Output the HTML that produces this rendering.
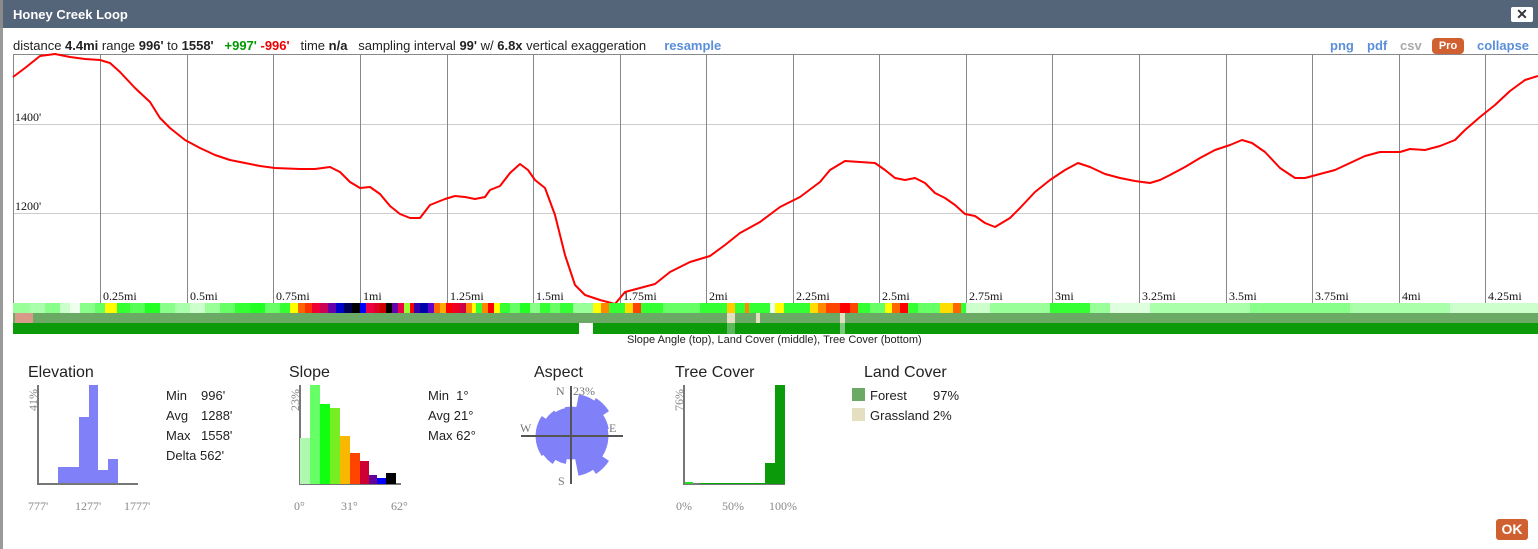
<!DOCTYPE html>
<html><head><meta charset="utf-8"><style>
*{margin:0;padding:0;box-sizing:border-box}
body{width:1538px;height:549px;overflow:hidden;background:#fff;font-family:"Liberation Sans",Arial,sans-serif;position:relative}
.bar{position:absolute;left:0;top:0;width:1538px;height:28px;background:#546479;border-left:3px solid #8a8a8a}
.bar .t{position:absolute;left:10px;top:7px;color:#fff;font-weight:bold;font-size:13px}
.x{position:absolute;left:1508px;top:7px;width:22px;height:15px;background:#fff;border-radius:2px;text-align:center;font-size:14px;line-height:15px;font-weight:bold;color:#333}
.lb{position:absolute;left:0;top:28px;width:3px;height:521px;background:#9a9a9a}
.hdr{position:absolute;left:13px;top:38px;font-size:13px;color:#222;white-space:nowrap}
.hdr b{font-weight:bold}
.lk{color:#5b8fd9;font-weight:bold}
.rt{position:absolute;top:38px;font-size:13px;font-weight:bold}
.pro{position:absolute;left:1432px;top:38px;width:32px;height:16px;background:#d0602f;color:#fff;border-radius:4px;font-size:11px;font-weight:bold;text-align:center;line-height:16px}
.strip{position:absolute;left:13px;width:1525px}
.ok{position:absolute;left:1496px;top:519px;width:32px;height:21px;background:#d0602f;color:#fff;border-radius:3px;font-size:14px;font-weight:bold;text-align:center;line-height:21px}
.cap{position:absolute;left:627px;top:334px;font-size:11px;color:#222}
</style></head><body>
<div class="bar"><span class="t">Honey Creek Loop</span><div class="x">✕</div></div>
<div class="lb"></div>
<div class="hdr">distance <b>4.4mi</b> range <b>996'</b> to <b>1558'</b> &nbsp;&nbsp;<b style="color:#090">+997'</b> <b style="color:#e00">-996'</b> &nbsp;&nbsp;time <b>n/a</b> &nbsp;&nbsp;sampling interval <b>99'</b> w/ <b>6.8x</b> vertical exaggeration &nbsp;&nbsp;&nbsp;&nbsp;<span class="lk">resample</span></div>
<span class="rt lk" style="left:1330px">png</span>
<span class="rt lk" style="left:1367px">pdf</span>
<span class="rt" style="left:1400px;color:#aaa">csv</span>
<div class="pro">Pro</div>
<span class="rt lk" style="left:1477px">collapse</span>

<svg style="position:absolute;left:0;top:0" width="1538" height="549">
<g stroke="#ccc" stroke-width="1"><line x1="13" y1="124.5" x2="1538" y2="124.5"/><line x1="13" y1="213.5" x2="1538" y2="213.5"/></g>
<g stroke="#888" stroke-width="1">
<line x1="13.5" y1="54" x2="13.5" y2="303"/><line x1="13" y1="54.5" x2="1538" y2="54.5"/>
<line x1="100.5" y1="54" x2="100.5" y2="303"/><line x1="187.5" y1="54" x2="187.5" y2="303"/><line x1="273.5" y1="54" x2="273.5" y2="303"/><line x1="360.5" y1="54" x2="360.5" y2="303"/><line x1="447.5" y1="54" x2="447.5" y2="303"/><line x1="533.5" y1="54" x2="533.5" y2="303"/><line x1="620.5" y1="54" x2="620.5" y2="303"/><line x1="706.5" y1="54" x2="706.5" y2="303"/><line x1="793.5" y1="54" x2="793.5" y2="303"/><line x1="879.5" y1="54" x2="879.5" y2="303"/><line x1="966.5" y1="54" x2="966.5" y2="303"/><line x1="1052.5" y1="54" x2="1052.5" y2="303"/><line x1="1139.5" y1="54" x2="1139.5" y2="303"/><line x1="1226.5" y1="54" x2="1226.5" y2="303"/><line x1="1312.5" y1="54" x2="1312.5" y2="303"/><line x1="1399.5" y1="54" x2="1399.5" y2="303"/><line x1="1485.5" y1="54" x2="1485.5" y2="303"/>
</g>
<g font-family="Liberation Serif,serif" font-size="12" fill="#111">
<text x="15" y="121">1400'</text><text x="15" y="210">1200'</text>
<text x="103" y="300">0.25mi</text><text x="190" y="300">0.5mi</text><text x="276" y="300">0.75mi</text><text x="363" y="300">1mi</text><text x="450" y="300">1.25mi</text><text x="536" y="300">1.5mi</text><text x="623" y="300">1.75mi</text><text x="709" y="300">2mi</text><text x="796" y="300">2.25mi</text><text x="882" y="300">2.5mi</text><text x="969" y="300">2.75mi</text><text x="1055" y="300">3mi</text><text x="1142" y="300">3.25mi</text><text x="1229" y="300">3.5mi</text><text x="1315" y="300">3.75mi</text><text x="1402" y="300">4mi</text><text x="1488" y="300">4.25mi</text>
</g>
<polyline fill="none" stroke="#f00" stroke-width="2" stroke-linejoin="round" points="13,77 25,68 40,56 55,54 70,57 85,59 100,60 110,63 120,72 135,88 150,102 160,118 170,128 185,140 200,148 215,155 230,160 245,163 260,166 275,168 300,169 315,169 330,167 340,172 350,182 360,188 370,187 380,194 390,206 400,214 410,218 420,218 430,205 445,199 455,196 465,197 475,199 485,197 490,190 500,186 510,173 520,164 528,170 535,180 545,188 555,215 565,255 575,285 585,295 600,300 615,304 625,292 640,288 655,284 670,272 690,262 710,256 725,245 740,233 760,222 780,207 800,197 820,182 830,170 845,161 860,162 875,163 885,170 895,178 905,180 915,178 925,183 935,193 945,198 955,205 965,214 975,216 985,223 995,227 1010,218 1020,208 1035,192 1050,180 1065,170 1078,163 1090,167 1105,174 1120,178 1135,181 1150,183 1160,180 1170,175 1185,167 1200,158 1215,150 1230,145 1242,140 1252,143 1265,152 1280,168 1295,178 1305,178 1320,174 1335,170 1350,163 1365,156 1380,152 1400,152 1410,149 1425,150 1440,146 1455,140 1465,130 1480,117 1495,105 1510,91 1525,80 1538,76"/>
</svg>

<div class="strip" style="top:303px;height:10px;background:linear-gradient(90deg,#9f9 0 17px,#afa 17px 32px,#8f8 32px 47px,#cfc 47px 57px,#efe 57px 67px,#8f8 67px 82px,#6f6 82px 92px,#ff0 92px 104px,#3f3 104px 117px,#5f5 117px 132px,#2f2 132px 147px,#8f8 147px 162px,#afa 162px 177px,#cfc 177px 192px,#9f9 192px 207px,#6f6 207px 222px,#3f3 222px 237px,#2f2 237px 252px,#6f6 252px 267px,#3f3 267px 277px,#ff0 277px 285px,#f60 285px 292px,#f30 292px 299px,#e03 299px 307px,#c05 307px 315px,#60a 315px 323px,#00c 323px 331px,#005 331px 339px,#000 339px 347px,#00f 347px 353px,#e04 353px 361px,#d02 361px 367px,#c00 367px 373px,#000 373px 379px,#60a 379px 385px,#e04 385px 391px,#9f3 391px 397px,#f00 397px 401px,#30a 401px 407px,#00a 407px 415px,#60c 415px 421px,#f60 421px 427px,#fa0 427px 433px,#f00 433px 439px,#e02 439px 447px,#c04 447px 453px,#f80 453px 459px,#ff0 459px 463px,#3f3 463px 469px,#f80 469px 475px,#f00 475px 481px,#ff0 481px 487px,#3f3 487px 497px,#6f6 497px 507px,#2f2 507px 517px,#8f8 517px 527px,#3f3 527px 537px,#6f6 537px 547px,#3f3 547px 560px,#9f9 560px 580px,#ff0 580px 588px,#f80 588px 596px,#3f3 596px 612px,#fd0 612px 620px,#f40 620px 628px,#3f3 628px 650px,#6f6 650px 687px,#3f3 687px 714px,#fc0 714px 722px,#3f3 722px 732px,#f80 732px 736px,#3f3 736px 757px,#efe 757px 762px,#ff0 762px 771px,#3f3 771px 797px,#fd0 797px 805px,#f80 805px 813px,#f40 813px 827px,#f00 827px 837px,#f40 837px 845px,#3f3 845px 857px,#6f6 857px 872px,#ff0 872px 879px,#f60 879px 887px,#f00 887px 895px,#3f3 895px 905px,#6f6 905px 927px,#fd0 927px 940px,#f60 940px 948px,#3f3 948px 953px,#cfc 953px 977px,#9f9 977px 1037px,#3f3 1037px 1077px,#9f9 1077px 1097px,#dfd 1097px 1137px,#afa 1137px 1237px,#8f8 1237px 1337px,#afa 1337px 1437px,#cfc 1437px 1525px)"></div>
<div class="strip" style="top:313px;height:10px;background:linear-gradient(90deg,#6aaa64 0 2px,#d99a8a 2px 20px,#6aaa64 20px 714px,#e3dfc0 714px 722px,#6aaa64 722px 743px,#e3dfc0 743px 747px,#6aaa64 747px 827px,#e3dfc0 827px 832px,#6aaa64 832px 1525px)"></div>
<div class="strip" style="top:323px;height:11px;background:linear-gradient(90deg,#0a9a0a 0 566px,#fff 566px 580px,#0a9a0a 580px 714px,#5bb85b 714px 722px,#0a9a0a 722px 827px,#7cc87c 827px 832px,#0a9a0a 832px 1525px)"></div>
<div class="cap">Slope Angle (top), Land Cover (middle), Tree Cover (bottom)</div>

<svg style="position:absolute;left:0;top:0" width="1538" height="549" font-family="Liberation Sans,Arial,sans-serif">
<g font-size="16" fill="#222"><text x="28" y="377">Elevation</text><text x="289" y="377">Slope</text><text x="534" y="377">Aspect</text><text x="675" y="377">Tree Cover</text><text x="864" y="377">Land Cover</text></g>
<g fill="#8080f8"><rect x="58" y="467" width="21" height="17"/><rect x="79" y="417" width="10" height="67"/><rect x="89" y="385" width="9" height="99"/><rect x="98" y="470" width="10" height="14"/><rect x="108" y="459" width="10" height="25"/></g>
<g stroke="#777" stroke-width="2" fill="none"><polyline points="38,385 38,484 138,484"/><polyline points="300,385 300,484 401,484"/><polyline points="684,385 684,484 785,484"/></g>
<g font-family="Liberation Serif,serif" font-size="12" fill="#888">
<text transform="translate(37,411) rotate(-90)">41%</text><text x="28" y="510">777'</text><text x="75" y="510">1277'</text><text x="124" y="510">1777'</text>
<text transform="translate(299,411) rotate(-90)">23%</text><text x="294" y="510">0°</text><text x="341" y="510">31°</text><text x="391" y="510">62°</text>
<text transform="translate(683,411) rotate(-90)">76%</text><text x="676" y="510">0%</text><text x="722" y="510">50%</text><text x="769" y="510">100%</text>
</g>
<g font-size="13" fill="#222"><text x="166" y="400">Min</text><text x="201" y="400">996'</text><text x="166" y="420">Avg</text><text x="201" y="420">1288'</text><text x="166" y="440">Max</text><text x="201" y="440">1558'</text><text x="166" y="460">Delta 562'</text>
<text x="428" y="400">Min &nbsp;1°</text><text x="428" y="420">Avg 21°</text><text x="428" y="440">Max 62°</text>
<text x="870" y="400">Forest</text><text x="933" y="400">97%</text><text x="870" y="420">Grassland 2%</text></g>
<rect x="852" y="388" width="13" height="13" fill="#6aaa64"/><rect x="852" y="408" width="13" height="13" fill="#e3dfc0"/>
<rect x="300" y="438" width="10" height="46" fill="#b0f8b0"/><rect x="310" y="385" width="10" height="99" fill="#66ff66"/><rect x="320" y="404" width="10" height="80" fill="#1f1"/><rect x="330" y="408" width="10" height="76" fill="#77ee22"/><rect x="340" y="436" width="10" height="48" fill="#f8b800"/><rect x="350" y="453" width="10" height="31" fill="#ff4400"/><rect x="360" y="461" width="9" height="23" fill="#cc0033"/><rect x="369" y="475" width="8" height="9" fill="#660099"/><rect x="377" y="478" width="9" height="6" fill="#0000ff"/><rect x="386" y="473" width="10" height="11" fill="#000"/>
<rect x="685" y="482" width="8" height="2" fill="#2d2"/><rect x="700" y="483" width="65" height="1" fill="#0a0"/><rect x="765" y="463" width="10" height="21" fill="#0a9a0a"/><rect x="775" y="385" width="10" height="99" fill="#0a9a0a"/>
<g transform="translate(571,436)" fill="#8080f8" stroke="#8080f8" stroke-width="0.8" stroke-linejoin="round">
<path d="M0 0L-5.66 -28.45A29 29 0 0 1 5.66 -28.45Z"/>
<path transform="rotate(22.5)" d="M0 0L-8.19 -41.2A42 42 0 0 1 8.19 -41.2Z"/>
<path transform="rotate(45)" d="M0 0L-8.78 -44.15A45 45 0 0 1 8.78 -44.15Z"/>
<path transform="rotate(67.5)" d="M0 0L-7.41 -37.28A38 38 0 0 1 7.41 -37.28Z"/>
<path transform="rotate(90)" d="M0 0L-7.22 -36.3A37 37 0 0 1 7.22 -36.3Z"/>
<path transform="rotate(112.5)" d="M0 0L-7.22 -36.3A37 37 0 0 1 7.22 -36.3Z"/>
<path transform="rotate(135)" d="M0 0L-8.78 -44.15A45 45 0 0 1 8.78 -44.15Z"/>
<path transform="rotate(157.5)" d="M0 0L-7.8 -39.24A40 40 0 0 1 7.8 -39.24Z"/>
<path transform="rotate(180)" d="M0 0L-4.49 -22.56A23 23 0 0 1 4.49 -22.56Z"/>
<path transform="rotate(202.5)" d="M0 0L-5.46 -27.47A28 28 0 0 1 5.46 -27.47Z"/>
<path transform="rotate(225)" d="M0 0L-6.44 -32.37A33 33 0 0 1 6.44 -32.37Z"/>
<path transform="rotate(247.5)" d="M0 0L-6.83 -34.34A35 35 0 0 1 6.83 -34.34Z"/>
<path transform="rotate(270)" d="M0 0L-6.83 -34.34A35 35 0 0 1 6.83 -34.34Z"/>
<path transform="rotate(292.5)" d="M0 0L-6.83 -34.34A35 35 0 0 1 6.83 -34.34Z"/>
<path transform="rotate(315)" d="M0 0L-5.85 -29.43A30 30 0 0 1 5.85 -29.43Z"/>
<path transform="rotate(337.5)" d="M0 0L-5.46 -27.47A28 28 0 0 1 5.46 -27.47Z"/>
</g>
<g stroke="#555" stroke-width="2"><line x1="521" y1="436" x2="623" y2="436"/><line x1="571" y1="386" x2="571" y2="484"/></g>
<g font-family="Liberation Serif,serif" font-size="12" fill="#777"><text x="556" y="395">N</text><text x="573" y="395">23%</text><text x="520" y="432">W</text><text x="609" y="432">E</text><text x="558" y="485">S</text></g>
</svg>
<div class="ok">OK</div>
</body></html>
